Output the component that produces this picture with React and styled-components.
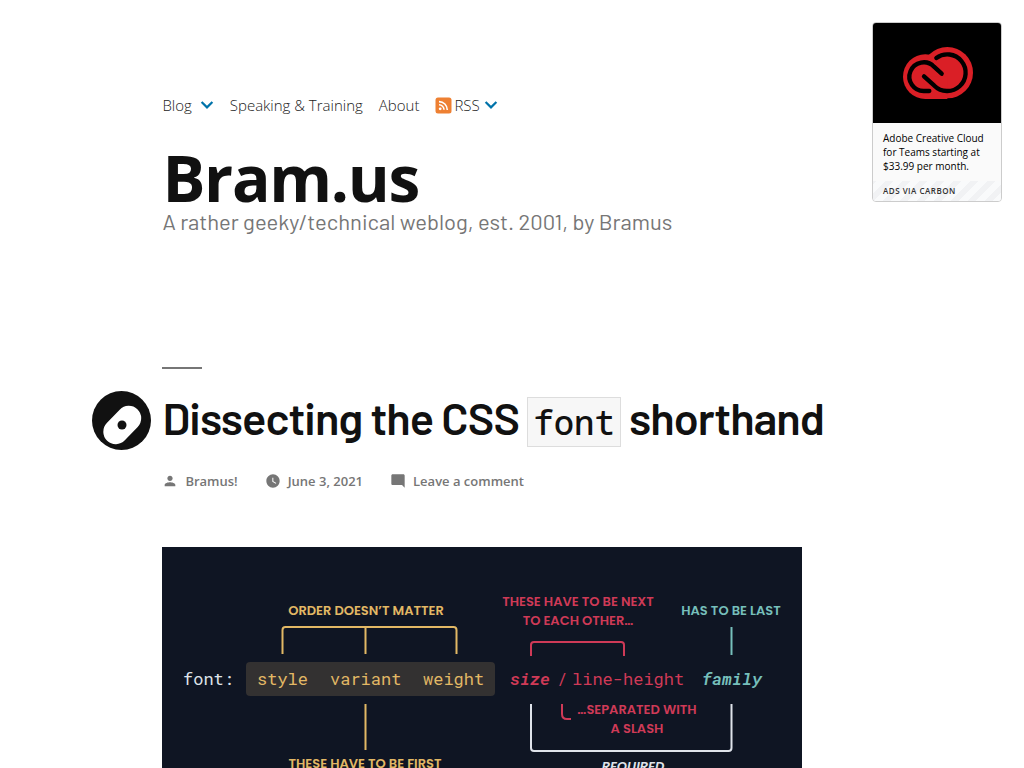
import React from "react";
import styled, { createGlobalStyle } from "styled-components";

const sans = `"Open Sans", "Noto Sans", sans-serif`;
const barlow = `Barlow, Roboto, sans-serif`;
const mono = `"Roboto Mono", "Noto Sans Mono", "DejaVu Sans Mono", monospace`;
const codeMono = `"Noto Sans Mono", "DejaVu Sans Mono", monospace`;

const GlobalStyle = createGlobalStyle`
  *, *::before, *::after { box-sizing: border-box; }
  body {
    margin: 0;
    background: #fff;
    color: #111;
    font-family: ${sans};
  }
  a { color: inherit; text-decoration: none; }
`;

const Page = styled.div`
  position: relative;
  padding: 92px 0 48px calc(10% + 60px);
`;

const Nav = styled.nav`
  display: flex;
  align-items: center;
  height: 26px;
  gap: 16px;
`;

const NavItem = styled.span`
  display: flex;
  align-items: center;
  gap: ${(p) => p.$gap || 0}px;
`;

const NavLink = styled.a`
  display: flex;
  align-items: center;
  gap: 2px;
  font: 300 15px/26px ${sans};
  color: #222;
`;

const SubToggle = styled.button`
  display: flex;
  border: 0;
  padding: 0;
  background: none;
  color: #0073aa;
`;

const SiteTitle = styled.h1`
  margin: 27px 0 0;
  font: 700 64px/66px ${sans};
  letter-spacing: -0.02em;
`;

const Tagline = styled.p`
  margin: 0;
  font: 400 22px/20px ${barlow};
  color: #767676;
`;

const Entry = styled.article`
  margin-top: 136px;
`;

const Rule = styled.div`
  width: 40px;
  height: 2px;
  background: #767676;
`;

const TitleRow = styled.header`
  display: flex;
  align-items: flex-start;
  gap: 11px;
  margin: 22px 0 0 -70px;
`;

const EntryTitle = styled.h2`
  margin: 0;
  font: 600 45px/52px ${barlow};
  letter-spacing: -0.02em;
`;

const Code = styled.code`
  padding: 1px 5px;
  border: 1px solid #ddd;
  background: #f7f7f7;
  font: 500 34px/40px ${codeMono};
  letter-spacing: normal;
`;

const Meta = styled.div`
  display: flex;
  gap: 27px;
  margin-top: 20px;
`;

const MetaItem = styled.a`
  display: flex;
  align-items: center;
  gap: 7px;
  font: 600 13px/22px ${sans};
  color: #767676;
`;

const Figure = styled.figure`
  margin: 55px 0 0;
  max-width: 640px;

  svg { display: block; width: 100%; height: auto; }
`;

const Ad = styled.aside`
  position: absolute;
  top: 22px;
  right: 22px;
  width: 130px;
  border: 1px solid #ccc;
  border-radius: 4px;
  overflow: hidden;
  background: #fafafa;
`;

const AdBanner = styled.a`
  display: flex;
  align-items: center;
  justify-content: center;
  height: 100px;
  padding-left: 2px;
  background: #000;
`;

const AdText = styled.a`
  display: block;
  padding: 8px 10px;
  font: 400 10px/14px ${sans};
  color: #000;
`;

const AdVia = styled.a`
  display: block;
  padding: 0 10px;
  font: 600 8px/20px ${sans};
  letter-spacing: 0.5px;
  text-transform: uppercase;
  color: #333;
  background: repeating-linear-gradient(-45deg, #f9fafb 0 6px, #f1f2f4 6px 12px);
`;

const Chevron = () => (
  <svg width="14" height="10" viewBox="0 0 14 10" fill="none" stroke="currentColor" strokeWidth="2.2">
    <path d="M1.6 2 7 7.4 12.4 2" />
  </svg>
);

const RssIcon = () => (
  <svg width="17" height="17" viewBox="0 0 17 17">
    <rect x="0.5" y="0.5" width="16" height="16" rx="2.5" fill="#ee8032" />
    <circle cx="5.2" cy="11.8" r="1.4" fill="#fff" />
    <path d="M4 7.800a5 5 0 0 1 5 5M4 4.600a8.300 8.300 0 0 1 8.300 8.300" fill="none" stroke="#fff" strokeWidth="1.6" />
  </svg>
);

const PersonIcon = () => (
  <svg width="16" height="16" viewBox="0 0 24 24" fill="currentColor">
    <path d="M12 12c2.2 0 4-1.8 4-4s-1.8-4-4-4-4 1.8-4 4 1.8 4 4 4zm0 2c-2.7 0-8 1.3-8 4v2h16v-2c0-2.7-5.3-4-8-4z" />
  </svg>
);

const ClockIcon = () => (
  <svg width="16" height="16" viewBox="0 0 24 24" fill="currentColor">
    <path d="M12 2C6.500 2 2 6.500 2 12s4.500 10 10 10 10-4.500 10-10S17.500 2 12 2zm4.200 14.200L11 13V7h1.500v5.200l4.500 2.700-.8 1.300z" />
  </svg>
);

const CommentIcon = () => (
  <svg width="16" height="16" viewBox="0 0 24 24" fill="currentColor">
    <path d="M22 4c0-1.100-.9-2-2-2H4c-1.100 0-2 .9-2 2v12c0 1.100.9 2 2 2h14l4 4V4z" />
  </svg>
);

const StickyIcon = () => (
  <svg width="59" height="59" viewBox="0 0 59 59">
    <circle cx="29.500" cy="29.500" r="29.500" fill="#111" />
    <path d="M23.800 40.700 36.700 27.300" stroke="#fff" strokeWidth="25" strokeLinecap="round" />
    <circle cx="30" cy="34" r="4.500" fill="#111" />
  </svg>
);

const CloudLogo = () => (
  <svg width="70" height="52" viewBox="129 111 210 156">
    <circle cx="196" cy="200" r="67" fill="#da1f26" />
    <circle cx="262" cy="188" r="77" fill="#da1f26" />
    <path d="M195 200h67v67h-67z" fill="#da1f26" />
    <g fill="none" stroke="#000" strokeWidth="13" strokeLinecap="round">
      <path d="M245 191 222 170A43 43 0 1 0 192 243H208" />
      <path d="M192 199 223 227A55 55 0 1 0 229 144" strokeLinejoin="round" />
    </g>
  </svg>
);

const Heading = ({ fill, lines, x, y, italic }) => (
  <text
    textAnchor="middle"
    fill={fill}
    fontFamily="Poppins, Inter, sans-serif"
    fontWeight="600"
    fontSize="13"
    fontStyle={italic ? "italic" : "normal"}
  >
    {lines.map((line, i) => (
      <tspan key={line} x={x} y={y + i * 19}>{line}</tspan>
    ))}
  </text>
);

const Word = ({ x, fill, italic, children }) => (
  <text
    x={x}
    y="138"
    fill={fill}
    fontFamily={mono}
    fontSize="17"
    fontStyle={italic ? "italic" : "normal"}
    fontWeight={italic ? "600" : "400"}
  >
    {children}
  </text>
);

const gold = "#e2b865";
const red = "#cf3a57";
const teal = "#76bfbb";
const light = "#dfe3ea";

const FontDiagram = () => (
  <svg viewBox="0 0 640 320" role="img" aria-label="Diagram of the font shorthand">
    <rect width="640" height="320" fill="#0f1523" />
    <rect x="84" y="115" width="249" height="34" rx="4" fill="#333131" />
    <g fill="none" strokeWidth="2">
      <path stroke={gold} d="M120.500 107V83q0-3 3-3H291.500q3 0 3 3v24M203.500 80v27M203.500 157v46" />
      <path stroke={red} d="M369 109V98q0-3 3-3h87q3 0 3 3v11M400 157v10q0 5 5 5h4" />
      <path stroke={teal} d="M569.500 80v28" />
      <path stroke={light} d="M369 157v44q0 3 3 3H566.500q3 0 3-3v-44" />
    </g>
    <Heading fill={gold} x={204} y={68} lines={["ORDER DOESN’T MATTER"]} />
    <Heading fill={gold} x={203} y={221} lines={["THESE HAVE TO BE FIRST"]} />
    <Heading fill={red} x={416} y={59} lines={["THESE HAVE TO BE NEXT", "TO EACH OTHER…"]} />
    <Heading fill={teal} x={569} y={68} lines={["HAS TO BE LAST"]} />
    <Heading fill={red} x={475} y={167} lines={["…SEPARATED WITH", "A SLASH"]} />
    <Heading fill={light} x={471} y={224} lines={["REQUIRED"]} italic />
    <Word x={21} fill={light}>font:</Word>
    <Word x={95} fill={gold}>style</Word>
    <Word x={168} fill={gold}>variant</Word>
    <Word x={261} fill={gold}>weight</Word>
    <Word x={348} fill={red} italic>size</Word>
    <Word x={395} fill={red}>/</Word>
    <Word x={410} fill={red}>line-height</Word>
    <Word x={540} fill={teal} italic>family</Word>
  </svg>
);

export default function App() {
  return (
    <>
      <GlobalStyle />
      <Page>
        <Nav aria-label="Top Menu">
          <NavItem $gap={8}>
            <NavLink href="#blog">Blog</NavLink>
            <SubToggle aria-label="Open Blog menu"><Chevron /></SubToggle>
          </NavItem>
          <NavItem><NavLink href="#speaking">Speaking &amp; Training</NavLink></NavItem>
          <NavItem><NavLink href="#about">About</NavLink></NavItem>
          <NavItem $gap={4}>
            <NavLink href="#rss"><RssIcon />RSS</NavLink>
            <SubToggle aria-label="Open RSS menu"><Chevron /></SubToggle>
          </NavItem>
        </Nav>
        <SiteTitle><a href="#home">Bram.us</a></SiteTitle>
        <Tagline>A rather geeky/technical weblog, est. 2001, by Bramus</Tagline>

        <Entry>
          <Rule />
          <TitleRow>
            <StickyIcon />
            <EntryTitle>Dissecting the CSS <Code>font</Code> shorthand</EntryTitle>
          </TitleRow>
          <Meta>
            <MetaItem href="#author"><PersonIcon />Bramus!</MetaItem>
            <MetaItem href="#date"><ClockIcon />June 3, 2021</MetaItem>
            <MetaItem href="#comments"><CommentIcon />Leave a comment</MetaItem>
          </Meta>
          <Figure><FontDiagram /></Figure>
        </Entry>

        <Ad>
          <AdBanner href="#ad" aria-label="Adobe Creative Cloud"><CloudLogo /></AdBanner>
          <AdText href="#ad">Adobe Creative Cloud for Teams starting at $33.99 per month.</AdText>
          <AdVia href="#carbon">ads via Carbon</AdVia>
        </Ad>
      </Page>
    </>
  );
}
